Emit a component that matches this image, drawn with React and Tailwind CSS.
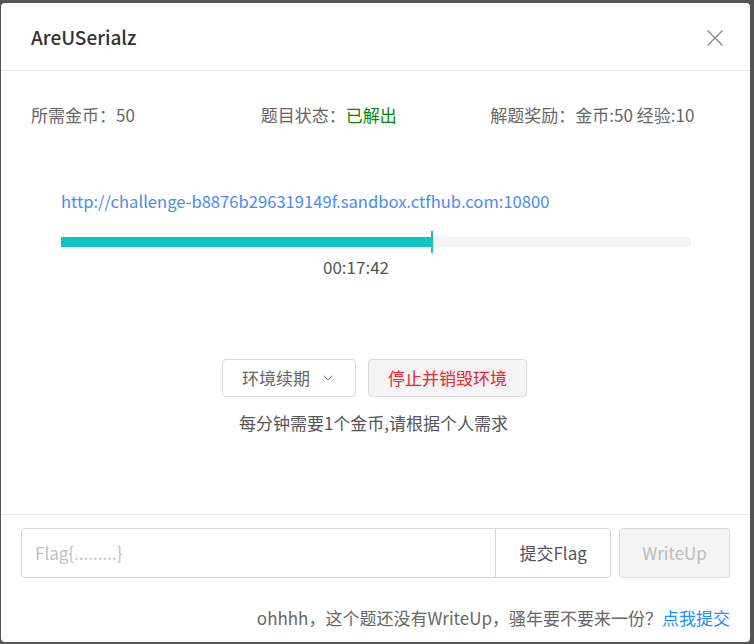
import React, { useState } from 'react';
import { X, ChevronDown } from 'lucide-react';

const FONT = { fontFamily: '"Noto Sans CJK SC", "Noto Sans", sans-serif' };

const App = () => {
    const [flag, setFlag] = useState('');

    return (
        <div className="w-[754px] h-[644px] bg-[#555555] pt-[3px] pl-[1px] pr-[4px] pb-[2px]" style={FONT}>
            <div className="h-full bg-white rounded-[4px] flex flex-col">
                <div className="h-[68px] px-[30px] flex items-center justify-between border-b border-[#e8e8e8]">
                    <h1 className="text-[19px] font-medium text-[#333] mt-[2px]">AreUSerialz</h1>
                    <X size={28} strokeWidth={1.2} className="text-[#888] mr-[-9px] mt-[2px]" />
                </div>

                <div className="flex-1 flex flex-col">
                    <div className="grid grid-cols-3 px-[30px] pt-[31px] text-[17px] text-[#666]">
                        <div>所需金币：50</div>
                        <div>题目状态：<span className="text-[#008800]">已解出</span></div>
                        <div>解题奖励：金币:50 经验:10</div>
                    </div>

                    <div className="px-[60px] pt-[61px]">
                        <a className="text-[16.6px] text-[#4a8cf0]">http://challenge-b8876b296319149f.sandbox.ctfhub.com:10800</a>
                        <div className="relative mt-[24px] h-[10px] bg-[#f4f4f4] w-[630px]">
                            <div className="h-full bg-[#13c2c2] w-[371px]" />
                            <div className="absolute left-[370px] top-[-6px] w-[2px] h-[22px] bg-[#13c2c2]" />
                        </div>
                        <div className="w-[630px] text-center text-[17px] text-[#555] mt-[7px] ml-[-20px]">00:17:42</div>
                    </div>

                    <div className="flex justify-center gap-[12px] mt-[79px] ml-[-2px]">
                        <button className="h-[38px] px-[19px] border border-[#d9d9d9] rounded-[4px] bg-white text-[17px] text-[#666] flex items-center gap-[10px]">
                            环境续期
                            <ChevronDown size={16} strokeWidth={1.5} className="text-[#888]" />
                        </button>
                        <button className="h-[38px] px-[19px] border border-[#d9d9d9] rounded-[4px] bg-[#f4f4f4] text-[17px] text-[#f5222d]">
                            停止并销毁环境
                        </button>
                    </div>
                    <p className="text-center text-[17px] text-[#555] mt-[13px] ml-[-4px]">每分钟需要1个金币,请根据个人需求</p>
                </div>

                <div className="border-t border-[#e8e8e8] px-[20px] pt-[13px] pb-[12px]">
                    <div className="flex gap-[8px]">
                        <div className="flex w-[591px] h-[50px] border border-[#d9d9d9] rounded-[4px]">
                            <input
                                className="flex-1 px-[13px] text-[17px] text-[#333] outline-none placeholder:text-[#bfbfbf] bg-transparent"
                                placeholder="Flag{.........}"
                                value={flag}
                                onChange={(e) => setFlag(e.target.value)}
                            />
                            <button className="w-[115px] border-l border-[#d9d9d9] text-[17px] text-[#555]">提交Flag</button>
                        </div>
                        <button className="w-[111px] h-[50px] border border-[#d9d9d9] rounded-[4px] bg-[#f4f4f4] text-[17px] text-[#bbb]" disabled>
                            WriteUp
                        </button>
                    </div>
                    <p className="text-right text-[17px] text-[#666] mt-[27px]">
                        ohhhh，这个题还没有WriteUp，骚年要不要来一份？<a className="text-[#1890ff]">点我提交</a>
                    </p>
                </div>
            </div>
        </div>
    );
};

export default App;
